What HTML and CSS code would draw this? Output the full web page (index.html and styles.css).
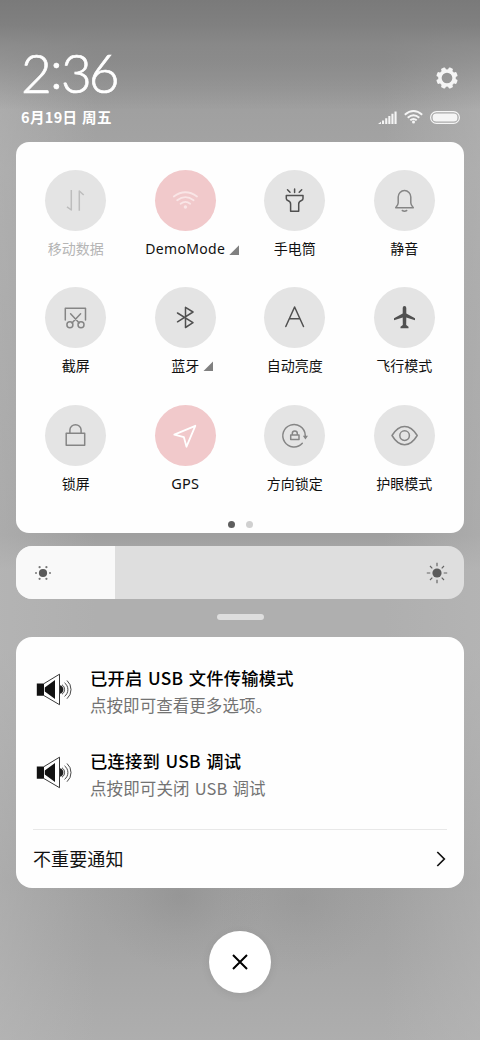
FILE: index.html
```html
<!DOCTYPE html>
<html lang="zh-CN">
<head>
<meta charset="utf-8">
<title>控制中心</title>
<link rel="stylesheet" href="styles.css">
</head>
<body>
<main class="screen">
  <header class="header">
    <div class="clock">
      <div class="time">2<span class="colon">:</span>36</div>
      <div class="date">6月19日 周五</div>
    </div>
    <div class="status">
      <svg class="gear" viewBox="0 0 22 22"><circle cx="11" cy="11" r="7.1" fill="none" stroke="currentColor" stroke-width="3.5"/><g fill="currentColor" transform="rotate(22.5 11 11)"><g id="teeth"><rect x="8.700" y="0.2" width="4.600" height="4" rx="1.2"/><rect x="8.700" y="17.8" width="4.600" height="4" rx="1.2"/><rect x="0.2" y="8.700" width="4" height="4.600" rx="1.2"/><rect x="17.8" y="8.700" width="4" height="4.600" rx="1.2"/></g><use href="#teeth" transform="rotate(45 11 11)"/></g></svg>
      <div class="status-row">
        <svg width="19" height="13" viewBox="0 0 19 13" fill="currentColor"><path d="M0 13L3 10.800V13zM4 9.500h2.100V13H4zM7.200 7.300h2.100V13H7.200zM10.300 5h2.100v8h-2.100zM13.400 2.700h2.100V13h-2.100zM16.500 .4h2.100V13h-2.100z"/></svg>
        <svg width="19" height="14" viewBox="0 0 19 14" fill="none" stroke="currentColor" stroke-width="1.900"><path d="M.8 4.700Q9.500-2.500 18.200 4.700M3.700 7.700Q9.500 2.700 15.300 7.700M6.300 10.300Q9.500 7.600 12.700 10.300"/><circle cx="9.500" cy="12.100" r="1.500" fill="currentColor" stroke="none"/></svg>
        <svg width="30" height="13" viewBox="0 0 30 13"><rect x=".6" y=".6" width="28.800" height="11.800" rx="5.900" fill="none" stroke="currentColor" stroke-width="1.200"/><rect x="2.600" y="2.600" width="24.800" height="7.800" rx="3.500" fill="currentColor"/></svg>
      </div>
    </div>
  </header>

  <section class="panel">
    <div class="tiles">
      <div class="tile off"><svg class="disc" viewBox="0 0 61 61"><path d="M26.300 20V40L22 36.800M34.300 40.700V21L38.700 25"/></svg><span class="label">移动数据</span></div>
      <div class="tile on"><svg class="disc faint" viewBox="0 0 61 61"><path d="M18.800 26.500Q30.400 18 42 26.500M22.200 30.200Q30.400 24 38.600 30.200M25.600 33.700Q30.400 30 35.200 33.700"/><circle class="solid" cx="30.400" cy="37" r="1.700"/></svg><span class="label latin demo">DemoMode<i class="corner"></i></span></div>
      <div class="tile dark"><svg class="disc" viewBox="0 0 61 61"><path d="M23.500 19.800L26 22.300M30.600 19V22.500M37.700 19.800L35.200 22.300M22.300 25.500H39V28.500Q39 30 37.500 30.500Q34.700 31.500 34.700 34V41.300H26.600V34Q26.600 31.500 23.800 30.500Q22.300 30 22.300 28.500Z"/></svg><span class="label">手电筒</span></div>
      <div class="tile"><svg class="disc" viewBox="0 0 61 61"><path d="M24.200 33V27A6.300 6.500 0 0 1 36.800 27V33Q36.800 34.700 39.300 37.700H21.700Q24.200 34.700 24.200 33ZM28.300 40.500Q30.500 41.800 32.700 40.500"/></svg><span class="label">静音</span></div>
      <div class="tile"><svg class="disc" viewBox="0 0 61 61"><path d="M20.300 33V21.300H40.500V33M25.600 26.800L34.200 36M35.600 26.800L27 36"/><circle cx="24.900" cy="37.800" r="3"/><circle cx="36" cy="37.800" r="3"/></svg><span class="label">截屏</span></div>
      <div class="tile dark"><svg class="disc" viewBox="0 0 61 61"><path d="M22.500 26L38 35.700L30.500 40.500V20.300L38 25L22.500 34.800"/></svg><span class="label">蓝牙<i class="corner"></i></span></div>
      <div class="tile dark"><svg class="disc" viewBox="0 0 61 61"><path d="M21.800 39.500L30.600 20L39.500 39.500M25.300 31.700H36"/></svg><span class="label">自动亮度</span></div>
      <div class="tile dark"><svg class="disc" viewBox="0 0 61 61"><path class="solid" d="M30.500 19Q32.300 19 32.300 21V26.500L41 31.300V33.200L32.300 30.500L32.200 38L34.500 39.800V41.200H26.500V39.800L28.800 38L28.700 30.500L20 33.200V31.300L28.700 26.500V21Q28.700 19 30.500 19Z"/></svg><span class="label">飞行模式</span></div>
      <div class="tile"><svg class="disc" viewBox="0 0 61 61"><path d="M21.200 28.300H39.700V40.300H21.200ZM24.900 28V25A5.600 5.300 0 0 1 36.100 25V28"/></svg><span class="label">锁屏</span></div>
      <div class="tile on"><svg class="disc" viewBox="0 0 61 61"><path d="M40.300 20.800L31.500 41.700L28.900 32.200L19.300 29.700Z"/></svg><span class="label latin gps">GPS</span></div>
      <div class="tile"><svg class="disc" viewBox="0 0 61 61"><path d="M41.200 31V30A11.200 11.200 0 1 0 38.300 38.300M26.700 30H35V34.400H26.700ZM28.300 30V28.500A2.500 2.500 0 0 1 33.300 28.500V30"/><path class="solid" d="M38.800 30.800H44L41.400 34.400Z"/></svg><span class="label">方向锁定</span></div>
      <div class="tile"><svg class="disc" viewBox="0 0 61 61"><path d="M18 30.500Q23.500 21.500 30.600 21.500T43.200 30.500Q37.700 39.700 30.600 39.700T18 30.500Z"/><circle cx="30.600" cy="30.600" r="4.800"/></svg><span class="label">护眼模式</span></div>
    </div>
    <div class="dots"><i class="dot active"></i><i class="dot"></i></div>
  </section>

  <section class="brightness">
    <div class="level"><svg width="18" height="18" viewBox="0 0 18 18" fill="#5b5b5b"><circle cx="9" cy="9" r="4.100"/><g fill="#777"><circle cx="2" cy="9" r="1"/><circle cx="16" cy="9" r="1"/><circle cx="5.600" cy="3.200" r="1.100"/><circle cx="12.400" cy="3.200" r="1.100"/><circle cx="5.600" cy="14.800" r="1.100"/><circle cx="12.400" cy="14.800" r="1.100"/></g></svg></div>
    <svg width="22" height="22" viewBox="0 0 22 22" fill="none" stroke="#666" stroke-width="1.200"><circle cx="11" cy="11" r="4.600" fill="#5b5b5b" stroke="none"/><path d="M11 .8V4.300M11 17.700V21.200M.8 11H4.300M17.700 11H21.200M4 4L6.300 6.300M15.700 15.700L18 18M18 4L15.700 6.300M6.300 15.700L4 18"/></svg>
  </section>
  <div class="handle"></div>

  <section class="notices">
    <article class="notice">
      <svg class="speaker" viewBox="0 0 36 36"><path d="M.8 11.500H8V23.800H.8ZM8.800 15.500L19 8V27L8.800 19.500Z" fill="#111"/><path d="M8 11.600L23.500 2.200V32.700L8 23.600" fill="none" stroke="#222" stroke-width=".9"/><path d="M24 13.300A4.300 4.300 0 0 1 24 21.700Z" fill="#222"/><g fill="none" stroke="#333" stroke-width=".9"><path d="M26 12.800A5.600 5.600 0 0 1 26 22.200M28.500 10.800A8.500 8.500 0 0 1 28.500 24.400M31 8.500A12.300 12.300 0 0 1 31 26.700"/></g></svg>
      <div><h2>已开启 USB 文件传输模式</h2><p>点按即可查看更多选项。</p></div>
    </article>
    <article class="notice">
      <svg class="speaker" viewBox="0 0 36 36"><path d="M.8 11.500H8V23.800H.8ZM8.800 15.500L19 8V27L8.800 19.500Z" fill="#111"/><path d="M8 11.600L23.500 2.200V32.700L8 23.600" fill="none" stroke="#222" stroke-width=".9"/><path d="M24 13.300A4.300 4.300 0 0 1 24 21.700Z" fill="#222"/><g fill="none" stroke="#333" stroke-width=".9"><path d="M26 12.800A5.600 5.600 0 0 1 26 22.200M28.500 10.800A8.500 8.500 0 0 1 28.500 24.400M31 8.500A12.300 12.300 0 0 1 31 26.700"/></g></svg>
      <div><h2>已连接到 USB 调试</h2><p class="wide">点按即可关闭 USB 调试</p></div>
    </article>
    <div class="more"><span>不重要通知</span><svg width="10" height="16" viewBox="0 0 10 16" fill="none" stroke="#111" stroke-width="1.700"><path d="M1.300 1L8.300 8L1.300 15"/></svg></div>
  </section>

  <div class="close"><svg width="16" height="16" viewBox="0 0 16 16" fill="none" stroke="#000" stroke-width="2"><path d="M1 1L15 15M15 1L1 15"/></svg></div>
</main>
</body>
</html>
```
FILE: styles.css
```css
* { box-sizing: border-box; }
body { margin: 0; font-family: "Noto Sans CJK SC", sans-serif; }
svg { display: block; flex: none; }
.screen {
  width: 480px; height: 1040px; padding: 0 16px; overflow: hidden;
  display: flex; flex-direction: column;
  background:
    radial-gradient(ellipse 85px 75px at 180px 896px, rgba(125,125,125,.3), rgba(125,125,125,.1) 55%, transparent),
    radial-gradient(ellipse 85px 75px at 302px 900px, rgba(130,130,130,.22), rgba(130,130,130,.08) 55%, transparent),
    linear-gradient(#7a7a7a 0, #808080 25px, rgba(134,134,134,.8) 45px, rgba(150,150,150,0) 110px),
    linear-gradient(90deg, rgba(184,184,184,.5), transparent 20%, transparent 80%, rgba(184,184,184,.5)),
    linear-gradient(#929292 60px, #a0a0a0 110px, #a5a5a5 170px, #9f9f9f 535px, #afafaf 570px, #afafaf 650px, #a0a0a0 880px, #a5a5a5 950px, #aeaeae 1040px);
}
.header { height: 142px; flex: none; display: flex; justify-content: space-between; padding: 46px 3px 0 5px; color: #fff; }
.time { font: 300 53px/56px Lato, sans-serif; letter-spacing: -2.800px; height: 62px; margin-top: -1px; -webkit-text-stroke: .7px #fff; }
.colon { position: relative; top: -4px; margin: 0 1px; }
.date { font-size: 14.500px; font-weight: 700; line-height: 20px; letter-spacing: .35px; word-spacing: 1px; }
.status { display: flex; flex-direction: column; align-items: flex-end; padding-top: 21px; color: #f5f5f5; }
.gear { width: 22px; height: 22px; margin-right: 3px; }
.status-row { display: flex; align-items: center; gap: 7px; margin: 21px 1px 0 0; }
.panel { height: 391px; flex: none; background: #fefefe; border-radius: 13px; padding: 28px 5px 0; }
.tiles { display: grid; grid-template-columns: repeat(4, 1fr); grid-auto-rows: 117.300px; }
.tile { display: flex; flex-direction: column; align-items: center; color: #858585; }
.disc { width: 61px; height: 61px; border-radius: 50%; background: #e4e4e4; fill: none; stroke: currentColor; stroke-width: 1.500; stroke-linejoin: round; stroke-linecap: round; }
.disc .solid { fill: currentColor; stroke: none; }
.label { font-size: 14px; line-height: 20px; margin-top: 7px; color: #111; position: relative; white-space: nowrap; }
.off { color: #bdbdbd; }
.off .disc { stroke-linecap: butt; }
.off .label { color: #b5b5b5; }
.dark { color: #505050; }
.on { color: #fff; }
.on .disc { background: #f1c9cb; stroke-width: 1.800; }
.on .faint { color: #f9e5e6; }
.latin { font-family: "Noto Sans", sans-serif; margin-top: 8px; }
.demo { letter-spacing: .35px; }
.gps { font-size: 14.500px; letter-spacing: .3px; margin-top: 7px; }
.corner { position: absolute; left: calc(100% + 4px); bottom: 4px; width: 10px; height: 10px; background: #808080; clip-path: polygon(100% 0, 100% 100%, 0 100%); }
.dots { display: flex; justify-content: center; gap: 11px; margin-top: -1px; }
.dot { width: 7px; height: 7px; border-radius: 50%; background: #d0d0d0; }
.dot.active { background: #5e5e5e; }
.brightness { height: 53px; flex: none; margin-top: 13px; border-radius: 16px; overflow: hidden; background: #dedede; display: flex; align-items: center; justify-content: space-between; padding-right: 16px; }
.level { width: 99px; height: 100%; background: #f9f9f9; display: flex; align-items: center; padding-left: 18px; }
.handle { width: 47px; height: 6px; flex: none; border-radius: 3px; background: #dedede; margin: 15px auto 17px; }
.notices { height: 251px; flex: none; background: #fefefe; border-radius: 16px; padding: 27px 17px 0; }
.notice { display: flex; height: 83px; padding-left: 3px; gap: 18px; }
.speaker { width: 36px; height: 36px; margin-top: 8px; }
h2, p { margin: 0; white-space: nowrap; }
h2 { font-size: 17.300px; line-height: 27px; font-weight: 500; color: #000; letter-spacing: .2px; word-spacing: 1.500px; }
p { font-size: 16.500px; line-height: 27px; margin-top: 1px; color: #737373; letter-spacing: .05px; }
.wide { letter-spacing: .1px; word-spacing: 1.300px; }
.more { height: 58px; margin-top: -1px; border-top: 1px solid #e8e8e8; display: flex; align-items: center; justify-content: space-between; font-size: 18px; color: #111; padding-right: 1px; letter-spacing: .1px; }
.more span { margin-top: -2px; }
.close { width: 62px; height: 62px; flex: none; margin: 43px auto 0; border-radius: 50%; background: #fff; display: flex; align-items: center; justify-content: center; box-shadow: 0 2px 10px rgba(0,0,0,.08); }
```
